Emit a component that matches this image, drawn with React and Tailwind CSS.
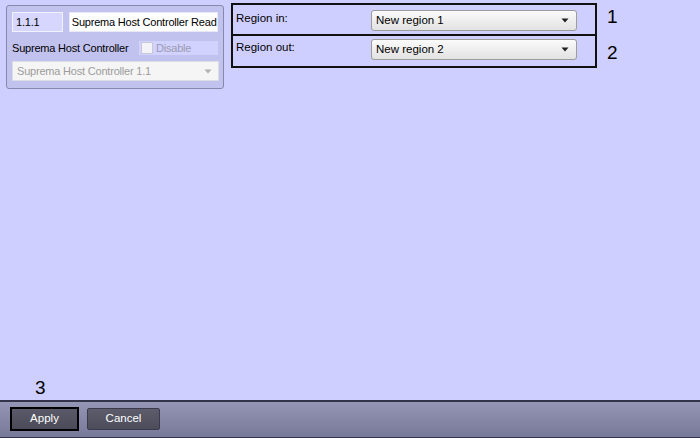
import React from 'react'

const font = { fontFamily: '"Liberation Sans", Arial, sans-serif' }

function Arrow({ color = '#202020' }) {
  return (
    <svg width="8" height="5" viewBox="0 0 8 5">
      <path d="M0.5 0.5 L7.5 0.5 L4 4.5 Z" fill={color} />
    </svg>
  )
}

function Combo({ value }) {
  return (
    <div className="w-[206px] h-[21px] flex items-center justify-between pl-[4px] pr-[7px] rounded-[3px] border border-[#9c9c9c] bg-gradient-to-b from-[#fbfbfb] to-[#e2e2e2] text-[11.5px] text-black">
      <span>{value}</span>
      <Arrow />
    </div>
  )
}

function DevicePanel() {
  return (
    <div className="ml-[6px] mt-[5px] w-[218px] h-[84px] rounded-[3px] border border-[#8888ac] bg-[#c2c2ef] px-[5px] pt-[6px] flex flex-col text-[11px] tracking-[-0.2px]">
      <div className="flex gap-[6px]">
        <div className="w-[51px] h-[20px] border border-[#f2f2ff] bg-[#d6d6ff] flex items-center pl-[3px] text-black">
          1.1.1
        </div>
        <div className="w-[150px] h-[20px] border border-[#e8e8f8] bg-white flex items-center pl-[2px] text-black whitespace-nowrap overflow-hidden">
          Suprema Host Controller Read
        </div>
      </div>
      <div className="mt-[9px] h-[14px] flex items-center justify-between">
        <span className="text-black whitespace-nowrap">Suprema Host Controller</span>
        <div className="w-[79px] h-[14px] bg-[#d2d2ff] flex items-center gap-[3px] pl-[2px]">
          <div className="w-[12px] h-[12px] border border-[#c8c8d8] bg-[#f4f4f8]" />
          <span className="text-[#9a9ab0]">Disable</span>
        </div>
      </div>
      <div className="mt-[6px] w-[207px] h-[20px] border border-[#dcdce4] bg-[#f5f5f5] flex items-center justify-between pl-[4px] pr-[6px] text-[#9c9c9c]">
        <span>Suprema Host Controller 1.1</span>
        <Arrow color="#b0b0b0" />
      </div>
    </div>
  )
}

function RegionTable() {
  return (
    <div className="ml-[7px] mt-[3px] w-[366px] border-2 border-[#101010] flex flex-col text-[11.5px] text-black">
      <div className="h-[29px] flex justify-between pl-[3px] pr-[18px]">
        <span className="pt-[5px]">Region in:</span>
        <div className="pt-[5px]"><Combo value="New region 1" /></div>
      </div>
      <div className="h-[2px] bg-[#101010]" />
      <div className="h-[30px] flex justify-between pl-[3px] pr-[18px]">
        <span className="pt-[3px]">Region out:</span>
        <div className="pt-[3px]"><Combo value="New region 2" /></div>
      </div>
    </div>
  )
}

export default function App() {
  return (
    <div className="w-[700px] h-[438px] bg-[#cfcfff] flex flex-col overflow-hidden" style={font}>
      <div className="h-[400px] flex flex-col">
        <div className="flex items-start">
          <DevicePanel />
          <RegionTable />
          <div className="ml-[10px] mt-[6px] flex flex-col text-[19px] leading-[22px] text-black">
            <span>1</span>
            <span className="mt-[14px]">2</span>
          </div>
        </div>
        <div className="flex-1" />
        <div className="pl-[35px] pb-[2px] text-[19px] leading-[20px] text-black">3</div>
      </div>
      <div className="h-[38px] border-t-2 border-b border-[#33334a] bg-gradient-to-b from-[#9595b6] to-[#787899] flex items-start pt-[5px] pl-[10px] gap-[8px]">
        <div className="w-[69px] h-[24px] border-2 border-black bg-gradient-to-b from-[#5a5a6a] to-[#4a4a58] flex items-center justify-center text-[11.5px] text-white">
          Apply
        </div>
        <div className="mt-[1px] w-[73px] h-[22px] rounded-[2px] border border-[#3a3a4c] bg-gradient-to-b from-[#5c5c6c] to-[#4c4c5a] flex items-center justify-center text-[11.5px] text-white">
          Cancel
        </div>
      </div>
    </div>
  )
}
